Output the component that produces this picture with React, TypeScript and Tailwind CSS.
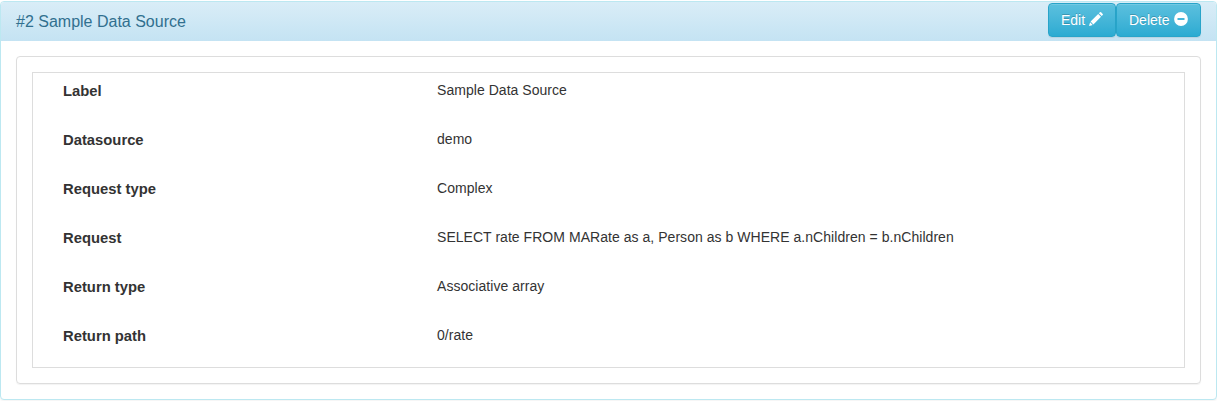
const rows = [
  { label: "Label", value: "Sample Data Source" },
  { label: "Datasource", value: "demo" },
  { label: "Request type", value: "Complex" },
  {
    label: "Request",
    value: "SELECT rate FROM MARate as a, Person as b WHERE a.nChildren = b.nChildren",
  },
  { label: "Return type", value: "Associative array" },
  { label: "Return path", value: "0/rate" },
];

const buttonClass =
  "flex h-[34px] items-center justify-between rounded border border-[#28a4c9] bg-linear-to-b from-[#5bc0de] to-[#2aabd2] px-3 text-sm leading-5 text-white shadow-[inset_0_1px_0_rgba(255,255,255,0.15),0_1px_1px_rgba(0,0,0,0.075)] [text-shadow:0_-1px_0_rgba(0,0,0,0.2)]";

function PencilIcon() {
  return (
    <svg className="mb-[2px] size-[14px]" viewBox="0 0 14 14" fill="currentColor" aria-hidden="true">
      <path d="M10.9.3a.9.9 0 0 1 1.2 0l1.6 1.6a.9.9 0 0 1 0 1.2l-1 1L9.9 1.3zM9.2 2 12 4.8l-7.6 7.6-2.8-2.8zM1.1 10.3 3.7 12.9 0 14z" />
    </svg>
  );
}

function MinusIcon() {
  return (
    <svg className="mb-[2px] size-[14px]" viewBox="0 0 14 14" fill="currentColor" aria-hidden="true">
      <path fillRule="evenodd" d="M7 .1a6.9 6.9 0 1 0 0 13.8A6.9 6.9 0 0 0 7 .1zM3.5 6h7v2h-7z" />
    </svg>
  );
}

export default function App() {
  return (
    <div className="h-[401px] bg-white pt-px font-['Liberation_Sans',Arial,sans-serif] text-sm leading-5 text-[#333]">
      <section className="h-[399px] rounded border border-[#bce8f1] bg-white shadow-[0_1px_2px_rgba(0,0,0,0.05)]">
        <header className="flex h-[39px] justify-between rounded-t-[3px] bg-linear-to-b from-[#d9edf7] to-[#c4e3f3] px-[15px]">
          <h3 className="pt-[11px] text-base leading-[18px] text-[#31708f]">#2 Sample Data Source</h3>
          <div className="flex pt-px">
            <button className={`${buttonClass} w-[68px]`}>
              Edit <PencilIcon />
            </button>
            <button className={`${buttonClass} w-[85px]`}>
              Delete <MinusIcon />
            </button>
          </div>
        </header>
        <div className="p-[15px]">
          <div className="h-[328px] rounded border border-[#ddd] p-[15px] shadow-[0_1px_1px_rgba(0,0,0,0.05)]">
            <dl className="h-[296px] border border-[#ddd] pt-[7px] pl-[30px]">
              {rows.map((row) => (
                <div key={row.label} className="flex h-[49px]">
                  <dt className="w-[374px] pt-px text-[14.8px] leading-5 font-bold">{row.label}</dt>
                  <dd className="tracking-[0.042px]">{row.value}</dd>
                </div>
              ))}
            </dl>
          </div>
        </div>
      </section>
    </div>
  );
}
